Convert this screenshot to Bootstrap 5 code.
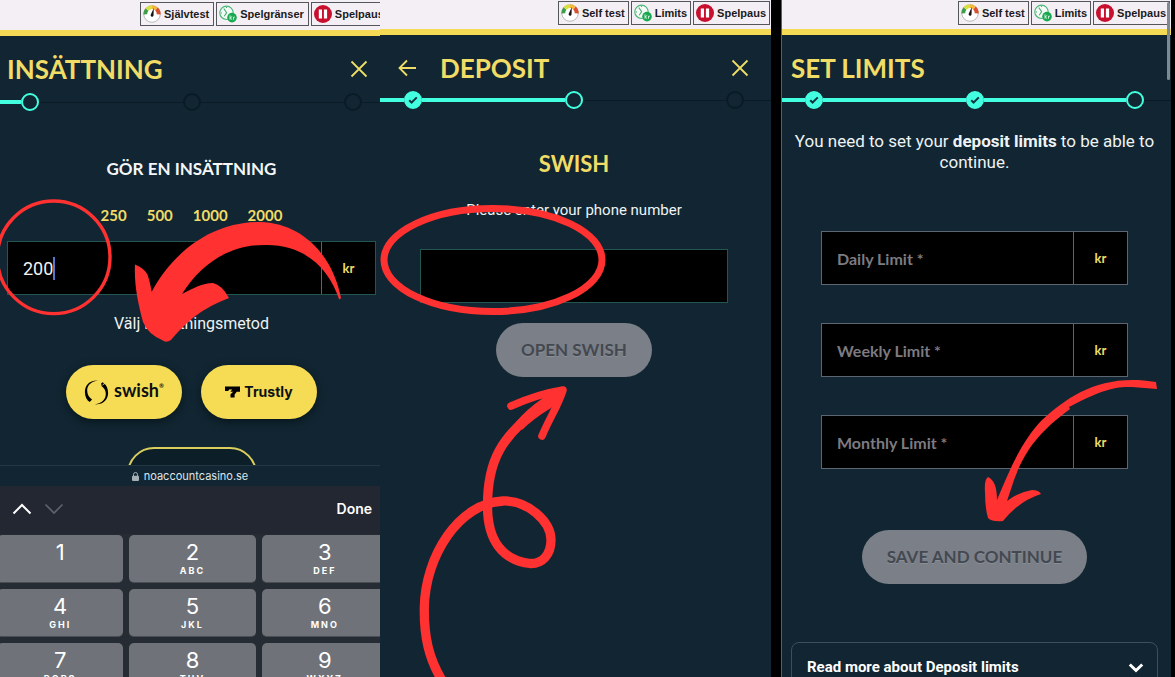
<!DOCTYPE html>
<html lang="en">
<head>
<meta charset="utf-8">
<meta name="viewport" content="width=device-width, initial-scale=1">
<title>Deposit with Swish</title>
<link href="https://cdn.jsdelivr.net/npm/bootstrap@5.3.0/dist/css/bootstrap.min.css" rel="stylesheet">
<style>
  :root { --night:#112632; --sun:#f5da55; --gold:#f1dc66; --mint:#42ffe0; --shade:#0a1b26; --grey:#7b7f87; }
  body { background:#000; color:#eef3f5; font-family:Roboto,"Liberation Sans",sans-serif; font-size:16px; line-height:21px; }
  button { font-family:inherit; }
  .screen { background:var(--night); min-width:0; flex:389 1 0; }
  .screen-first { flex-grow:380; }
  .screen-mid { flex-grow:391; }
  .screen-last { margin:0 4px 0 10px; border-left:1px solid #54636b; }

  .topbar { background:#f4eff4; height:35px; border-bottom:6px solid var(--sun); padding:1px 1px 0 0; gap:2px; }
  .screen-first .topbar { height:36px; padding:2px 0 0 140px; justify-content:flex-start; }
  .tool-link { display:flex; align-items:center; gap:3px; height:24px; padding:0 3px 0 2px; flex:none; border:1px solid #55555c; color:#1c1a20; font:bold 11px/16px "Liberation Sans",sans-serif; text-decoration:none; }
  .tool-link svg { width:18px; height:18px; }
  .screen-first .tool-link { padding-right:4px; }

  .display-text { font-family:Lato,"Liberation Sans",sans-serif; font-weight:700; color:var(--gold); margin:0; }
  .title-row { height:56px; padding:9px 22px 0 9px; gap:24px; }
  .screen-first .title-row { height:57px; padding:8px 12px 0 7px; }
  .screen-mid .title-row { padding-left:18px; }
  .title-row h1 { font-size:26px; line-height:36px; }
  .bare { background:none; border:0; padding:0; display:flex; }

  .stepper { height:18px; }
  .step-line { height:1px; background:var(--shade); flex:1; }
  .step-line.done { height:4px; background:var(--mint); }
  .step-line.lead-in { flex:0 0 24px; }
  .screen-first .lead-in { flex-basis:21px; }
  .screen-last .lead-in { flex-basis:23px; }
  .step-line.tail { flex:0 0 27px; }
  .screen-first .tail { flex-basis:18px; }
  .step-dot { width:18px; height:18px; border:2px solid var(--shade); border-radius:50%; flex:none; display:flex; align-items:center; justify-content:center; }
  .step-dot.now { border-color:var(--mint); }
  .step-dot.ok { border-color:var(--mint); background:var(--mint); }

  .money { height:54px; border:1px solid #5c6670; flex-wrap:nowrap; }
  .money .form-control { background:#000; color:#f2f2f4; border:0; border-radius:0; padding:0 15px; font-size:18px; box-shadow:none; }
  .money .form-control::placeholder { color:#7d7b80; opacity:1; font-family:Lato,sans-serif; font-weight:700; font-size:16px; }
  .money .unit { position:relative; z-index:6; width:54px; flex:none; border-left:1px solid #5c6670; background:#000; color:var(--gold); font:700 13px/20px Lato,sans-serif; display:flex; align-items:center; justify-content:center; }
  .money.active { border-color:#22564f; }
  .caret { position:absolute; left:46px; top:15px; width:2px; height:23px; background:#5379cf; z-index:6; }

  .first-body { padding:48px 4px 0 7px; }
  .first-body h2 { font-size:17px; line-height:20px; color:#f4f6f8; }
  .presets { gap:20px; margin:26px 0 15px; height:21px; }
  .presets button { font:700 15px/21px Lato,sans-serif; color:var(--gold); }
  .method-label { margin:0; padding:18px 0 7px; }
  .pay-row { gap:19px; }
  .pay { width:116px; height:54px; border-radius:27px; border:0; background:#f6dc54; color:#0b1116; box-shadow:0 3px 8px #08161e; display:flex; align-items:center; justify-content:center; }
  .pay-swish { font:700 18px/22px Lato,sans-serif; gap:5px; }
  .pay-swish span { margin-top:-4px; }
  .pay-trustly { font:700 14px/20px Inter,sans-serif; gap:4px; }
  .pay sup { font-size:6px; top:-9px; }
  .peek { height:18px; margin-top:28px; }
  .peek button { width:130px; height:54px; border:2px solid #d9ce5e; border-radius:27px; background:#0c1e28; }

  .address { height:21px; border-top:1px solid #213741; font:11px/20px Inter,sans-serif; gap:5px; color:#dfe5e8; }
  .keybar { height:48px; background:#222732; padding:0 8px 2px 12px; font:600 14px/20px Inter,sans-serif; }
  .keypad { background:#262c34; display:grid; grid-template-columns:repeat(3,1fr); gap:6px; margin:0 -8px 0 -3px; padding-top:1px; }
  .keypad button { height:48px; background:#6f7379; border:0; border-bottom:1px solid #4a4e54; border-radius:5px; color:#fff; padding:4px 0 0; display:flex; flex-direction:column; align-items:center; font:22px/26px Inter,sans-serif; }
  .keypad small { font:700 9px/12px Inter,sans-serif; letter-spacing:2px; }

  .mid-body { padding:41px 43px 0 40px; }
  .mid-body h2 { font-size:22px; line-height:28px; }
  .mid-body label { margin:22px 0 28px; font-size:15px; }
  .wide-pill { height:54px; border:0; border-radius:27px; padding:0 25px; background:var(--grey); color:#434851; font:700 17px/22px Lato,sans-serif; text-shadow:0 1px 0 #8b8f96; }
  .last-body { padding:22px 13px 0 9px; font-size:17px; }
  .limits { padding:0 30px; margin-top:58px; gap:38px; }
  .save-pill { margin:61px 0 58px; }
  .read-more { height:60px; border:1px solid #3c4f5a; border-radius:8px; padding:0 13px 9px 15px; background:var(--night); color:#fff; font-size:15px; font-weight:700; }
  .scroll-thumb { position:absolute; right:1px; top:2px; width:3px; height:78px; border-radius:2px; background:#7d8a93; }
  .marks { position:absolute; left:0; top:0; width:100%; z-index:10; pointer-events:none; overflow:visible; }
</style>
</head>
<body>
<svg width="0" height="0" class="position-absolute" aria-hidden="true">
  <defs>
    <symbol id="gauge" viewBox="0 0 18 18">
      <circle cx="9" cy="9" r="8.300" fill="#fff" stroke="#b9b9b9"/>
      <g fill="none" stroke-width="3.800">
        <path d="M2.300 9.300A6.800 6.800 0 0 1 4 4.400" stroke="#3f9c48"/>
        <path d="M4 4.400A6.800 6.800 0 0 1 9 2.200" stroke="#d9df3c"/>
        <path d="M9 2.200A6.800 6.800 0 0 1 13.500 4" stroke="#f3b73b"/>
        <path d="M13.500 4A6.800 6.800 0 0 1 15.700 9.300" stroke="#d8502d"/>
      </g>
      <path d="M10.800 3 10.500 10.700A1.500 1.500 0 0 1 7.600 10z" fill="#151515"/>
    </symbol>
    <symbol id="clock" viewBox="0 0 18 18">
      <circle cx="7.500" cy="7.800" r="6.700" fill="#f5faf7" stroke="#4db87c" stroke-width="1.200"/>
      <path d="m4.800 3.500 2.800 4.300-2.400 3.400M2 8h1M7.500 2v1" fill="none" stroke="#42ad70" stroke-width="1.100"/>
      <circle cx="13" cy="12.600" r="4.800" fill="#18a84f"/>
      <path d="M11 10.300v4.400m2.200-3.200L11 12.800l2.200 1.900m1.300 0v-2.800m0 .9 1.400-.9" fill="none" stroke="#d9f4e2" stroke-width=".9"/>
    </symbol>
    <symbol id="pause" viewBox="0 0 18 18">
      <circle cx="9" cy="9" r="9" fill="#c8102e"/>
      <path d="M4.800 4.500h3.200v9H4.800zM9.900 4.500h3.200v9H9.900z" fill="#fff"/>
    </symbol>
    <symbol id="cross" viewBox="0 0 18 18"><path d="m1.500 1.500 15 15m0-15-15 15" fill="none" stroke="#efdc67" stroke-width="1.800"/></symbol>
    <symbol id="tick" viewBox="0 0 10 8"><path d="m1.200 4.200 2.400 2.300L8.800 1.400" fill="none" stroke="#123541" stroke-width="2"/></symbol>
  </defs>
</svg>

<main class="d-flex vh-100 overflow-hidden">

  <section class="screen screen-first position-relative overflow-hidden d-flex flex-column" lang="sv">
    <nav class="topbar d-flex align-items-start flex-shrink-0 overflow-hidden" aria-label="Spelansvar">
      <a class="tool-link" href="#test"><svg><use href="#gauge"/></svg>Självtest</a>
      <a class="tool-link" href="#granser"><svg><use href="#clock"/></svg>Spelgränser</a>
      <a class="tool-link" href="#paus"><svg><use href="#pause"/></svg>Spelpaus</a>
    </nav>
    <header class="title-row d-flex align-items-center flex-shrink-0">
      <h1 class="display-text me-auto">INSÄTTNING</h1>
      <button class="bare" type="button" aria-label="Stäng"><svg width="18" height="18"><use href="#cross"/></svg></button>
    </header>
    <div class="stepper d-flex align-items-center flex-shrink-0">
      <span class="step-line lead-in done"></span><span class="step-dot now"></span>
      <span class="step-line"></span><span class="step-dot"></span>
      <span class="step-line"></span><span class="step-dot"></span><span class="step-line tail"></span>
    </div>
    <div class="first-body text-center flex-shrink-0">
      <h2 class="display-text">GÖR EN INSÄTTNING</h2>
      <div class="presets d-flex justify-content-center">
        <button class="bare" type="button">250</button><button class="bare" type="button">500</button>
        <button class="bare" type="button">1000</button><button class="bare" type="button">2000</button>
      </div>
      <div class="input-group money active position-relative">
        <input class="form-control" type="text" inputmode="numeric" value="200" aria-label="Belopp">
        <span class="caret"></span>
        <span class="unit">kr</span>
      </div>
      <p class="method-label">Välj insättningsmetod</p>
      <div class="pay-row d-flex justify-content-center mt-4">
        <button class="pay pay-swish" type="button" aria-label="swish">
          <svg width="25" height="25" viewBox="0 0 25 25"><path d="M14 .6C5 .2.8 6 .9 12.200c.1 4.600 2 8.100 4.800 9.900l2.400-2.500C5 17.500 3.200 14.500 3.200 10.600 3.200 5.400 7 1.600 14 .6z"/><path d="M11 24.400c9 .4 13.200-5.400 13.100-11.600-.1-4.300-1.500-7.500-4.100-9.500l-2.500 2.600c2.800 2 4.400 4.700 4.300 8.200-.1 5.200-3.800 9.300-10.800 10.300zM17.500 5.900l-.3-2.700 1.500-.9 2 1.600z"/></svg>
          <span>swish<sup>®</sup></span>
        </button>
        <button class="pay pay-trustly" type="button">
          <svg width="15" height="12" viewBox="0 0 15 12"><path d="M0 .5h15v5.200h-3.200L9.600 8.600v3H5.500V8.200L8.200 5.700H5.400L7.200 3.500H4.200L3.200 5H0z"/></svg>
          Trustly
        </button>
      </div>
      <div class="peek overflow-hidden d-flex justify-content-center align-items-start"><button type="button" aria-label="Fler betalsätt"></button></div>
    </div>
    <div class="address d-flex justify-content-center align-items-center flex-shrink-0">
      <svg width="7" height="9" viewBox="0 0 7 9"><rect y="3.700" width="7" height="5.300" rx="1" fill="#a5afb5"/><path d="M1.500 4V2.500a2 2 0 0 1 4 0V4" fill="none" stroke="#a5afb5"/></svg>
      noaccountcasino.se
    </div>
    <div class="keybar d-flex align-items-center flex-shrink-0">
      <button class="bare" type="button" aria-label="Previous"><svg width="20" height="12" viewBox="0 0 20 12"><path d="m1.500 10.500 8.500-8.500 8.500 8.500" fill="none" stroke="#fff" stroke-width="2"/></svg></button>
      <button class="bare ms-2 ps-1" type="button" aria-label="Next"><svg width="20" height="12" viewBox="0 0 20 12"><path d="m1.500 1.500 8.500 8.500 8.500-8.500" fill="none" stroke="#5d636c" stroke-width="1.700"/></svg></button>
      <button class="bare ms-auto text-white fw-semibold" type="button">Done</button>
    </div>
    <div class="keypad flex-grow-1 align-content-start">
      <button type="button">1</button>
      <button type="button">2<small>ABC</small></button>
      <button type="button">3<small>DEF</small></button>
      <button type="button">4<small>GHI</small></button>
      <button type="button">5<small>JKL</small></button>
      <button type="button">6<small>MNO</small></button>
      <button type="button">7<small>PQRS</small></button>
      <button type="button">8<small>TUV</small></button>
      <button type="button">9<small>WXYZ</small></button>
    </div>
    <svg class="marks" viewBox="0 0 380 677" aria-hidden="true">
      <circle cx="53.700" cy="257.300" r="56.300" fill="none" stroke="#ff3131" stroke-width="3.400"/>
      <path fill="#ff3131" d="M135 264.500Q144 268 147.700 275Q150 282 151.700 291.700C171 256 208 222 260 222C304 223 333 257 341 298Q340.500 299.500 339 299C330 272 308 245 267 245C232 244 202 262 182 294C194 288 202 283 213 283Q222 285 229 298C202 309 190 318 171 340Q166 343.500 162 340Q148 334 143 322C138 303 134 285 135 264.500z"/>
    </svg>
  </section>

  <section class="screen screen-mid position-relative">
    <nav class="topbar d-flex align-items-start justify-content-end" aria-label="Responsible gaming">
      <a class="tool-link" href="#self-test"><svg><use href="#gauge"/></svg>Self test</a>
      <a class="tool-link" href="#limits"><svg><use href="#clock"/></svg>Limits</a>
      <a class="tool-link" href="#spelpaus"><svg><use href="#pause"/></svg>Spelpaus</a>
    </nav>
    <header class="title-row d-flex align-items-center">
      <button class="bare" type="button" aria-label="Back"><svg width="18" height="18" viewBox="0 0 18 18"><path d="M18 9H1.500M9 1.500 1.500 9 9 16.500" fill="none" stroke="#efdc67" stroke-width="1.800"/></svg></button>
      <h1 class="display-text me-auto">DEPOSIT</h1>
      <button class="bare" type="button" aria-label="Close"><svg width="18" height="18"><use href="#cross"/></svg></button>
    </header>
    <div class="stepper d-flex align-items-center">
      <span class="step-line lead-in done"></span><span class="step-dot ok"><svg width="10" height="8"><use href="#tick"/></svg></span>
      <span class="step-line done"></span><span class="step-dot now"></span>
      <span class="step-line"></span><span class="step-dot"></span><span class="step-line tail"></span>
    </div>
    <div class="mid-body text-center">
      <h2 class="display-text">SWISH</h2>
      <label class="d-block" for="phone">Please enter your phone number</label>
      <div class="input-group money active mb-3"><input class="form-control" id="phone" type="tel"></div>
      <button class="wide-pill mt-1" type="button">OPEN SWISH</button>
    </div>
    <svg class="marks" viewBox="0 0 391 677" aria-hidden="true">
      <g fill="none" stroke="#ff3131" stroke-linecap="round" stroke-linejoin="round">
        <ellipse cx="113" cy="260" rx="109" ry="51.500" stroke-width="7"/>
        <path stroke-width="9.300" d="M63 682C48 658 44 635 44.300 608C45 556 79 503 123 501C147 500 171 521 171 540C171 555 162 564 150 563.500C122 560 108 540 107.500 508C107 462 120 436 165 404"/>
        <path stroke-width="7.600" d="M131 406C149 398 164 393 183 390C178 406 170 417 162 436"/>
      </g>
      <path fill="#ff3131" d="M136 422Q147 409 163 398L178 388 182 398 171 408Q153 419 142 430z"/>
    </svg>
  </section>

  <section class="screen screen-last position-relative">
    <nav class="topbar d-flex align-items-start justify-content-end" aria-label="Responsible gaming">
      <a class="tool-link" href="#self-test"><svg><use href="#gauge"/></svg>Self test</a>
      <a class="tool-link" href="#limits"><svg><use href="#clock"/></svg>Limits</a>
      <a class="tool-link" href="#spelpaus"><svg><use href="#pause"/></svg>Spelpaus</a>
    </nav>
    <span class="scroll-thumb"></span>
    <header class="title-row d-flex align-items-center"><h1 class="display-text">SET LIMITS</h1></header>
    <div class="stepper d-flex align-items-center">
      <span class="step-line lead-in done"></span><span class="step-dot ok"><svg width="10" height="8"><use href="#tick"/></svg></span>
      <span class="step-line done"></span><span class="step-dot ok"><svg width="10" height="8"><use href="#tick"/></svg></span>
      <span class="step-line done"></span><span class="step-dot now"></span><span class="step-line tail"></span>
    </div>
    <div class="last-body text-center">
      <p class="m-0">You need to set your <b>deposit limits</b> to be able to continue.</p>
      <div class="limits d-flex flex-column">
        <div class="input-group money"><input class="form-control" type="text" placeholder="Daily Limit *" aria-label="Daily Limit"><span class="unit">kr</span></div>
        <div class="input-group money"><input class="form-control" type="text" placeholder="Weekly Limit *" aria-label="Weekly Limit"><span class="unit">kr</span></div>
        <div class="input-group money"><input class="form-control" type="text" placeholder="Monthly Limit *" aria-label="Monthly Limit"><span class="unit">kr</span></div>
      </div>
      <button class="wide-pill save-pill" type="button">SAVE AND CONTINUE</button>
      <button class="read-more w-100 d-flex align-items-center justify-content-between" type="button">Read more about Deposit limits
        <svg width="16" height="10" viewBox="0 0 16 10"><path d="m1.800 1.500 6.200 6 6.200-6" fill="none" stroke="#fff" stroke-width="3"/></svg>
      </button>
    </div>
    <svg class="marks" viewBox="1 0 389 677" aria-hidden="true">
      <path fill="#ff3131" d="M375 382C322 373 288 395 261 420C240 442 230 467 216 500Q216 481 207 477Q203 480 204 492Q204 508 207 518Q211 522 222 521Q238 501 260 494Q258 490 251 490Q238 492 226 501L233 480C244 450 258 432 289 409L288 407C318 391 334 386 351 387L376 389z"/>
    </svg>
  </section>
</main>
<script src="https://cdn.jsdelivr.net/npm/bootstrap@5.3.0/dist/js/bootstrap.bundle.min.js"></script>
</body>
</html>
